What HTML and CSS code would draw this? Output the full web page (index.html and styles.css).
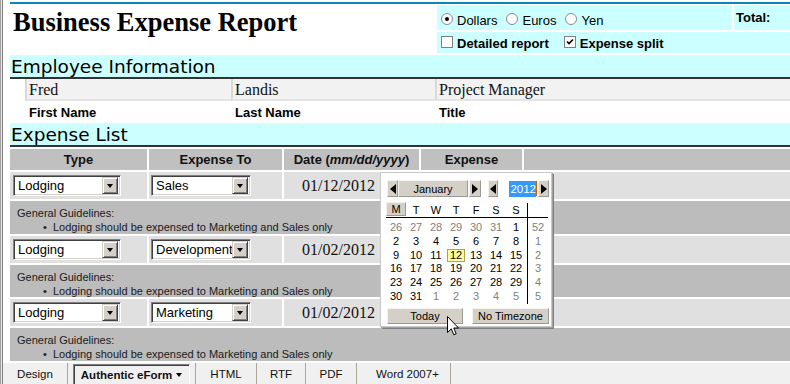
FILE: index.html
```html
<!DOCTYPE html>
<html>
<head>
<meta charset="utf-8">
<title>Business Expense Report</title>
<link rel="stylesheet" href="styles.css">
</head>
<body>
<div class="window">
  <div class="frame-edge"></div>
  <div class="main">
    <div class="doc">
      <div class="topline"></div>
      <div class="head">
        <div class="title-cell"><h1 class="title">Business Expense Report</h1></div>
        <div class="opts">
          <div class="opt-row1">
            <div class="currency">
              <svg class="radio" viewBox="0 0 12 12"><circle cx="6" cy="6" r="5.5" fill="#fff" stroke="#8a8a8a"/><circle cx="6" cy="6" r="2" fill="#000"/></svg><span class="lbl">Dollars</span>
              <svg class="radio" viewBox="0 0 12 12"><circle cx="6" cy="6" r="5.5" fill="#fff" stroke="#8a8a8a"/></svg><span class="lbl">Euros</span>
              <svg class="radio" viewBox="0 0 12 12"><circle cx="6" cy="6" r="5.5" fill="#fff" stroke="#8a8a8a"/></svg><span class="lbl">Yen</span>
            </div>
            <div class="total">Total:</div>
          </div>
          <div class="opt-row2">
            <svg class="check" viewBox="0 0 12 12"><rect x="0.5" y="0.5" width="11" height="11" fill="#fff" stroke="#808080"/></svg><span class="lbl">Detailed report</span>
            <svg class="check second" viewBox="0 0 12 12"><rect x="0.5" y="0.5" width="11" height="11" fill="#fff" stroke="#808080"/><path d="M3 5.5 L5 7.5 L9 3.5" fill="none" stroke="#000" stroke-width="1.6"/></svg><span class="lbl">Expense split</span>
          </div>
        </div>
      </div>

      <div class="band band-first">Employee Information</div>
      <div class="emp emp-values">
        <div class="ecell">Fred</div>
        <div class="ecell">Landis</div>
        <div class="ecell">Project Manager</div>
      </div>
      <div class="emp emp-labels">
        <div class="lcell">First Name</div>
        <div class="lcell">Last Name</div>
        <div class="lcell">Title</div>
      </div>

      <div class="band">Expense List</div>
      <div class="expenses">
        <div class="th">Type</div>
        <div class="th">Expense To</div>
        <div class="th">Date (<i>mm/dd/yyyy</i>)</div>
        <div class="th">Expense</div>
        <div class="th"></div>

        <div class="td"><div class="select s-type"><span class="val">Lodging</span><span class="drop"></span></div></div>
        <div class="td"><div class="select s-to"><span class="val">Sales</span><span class="drop"></span></div></div>
        <div class="td date">01/12/2012</div>
        <div class="td"></div>
        <div class="td"></div>
        <div class="guide">
          <div>General Guidelines:</div>
          <div class="bullet"><span class="dot">•</span>Lodging should be expensed to Marketing and Sales only</div>
        </div>

        <div class="td"><div class="select s-type"><span class="val">Lodging</span><span class="drop"></span></div></div>
        <div class="td"><div class="select s-to"><span class="val">Development</span><span class="drop"></span></div></div>
        <div class="td date">01/02/2012</div>
        <div class="td"></div>
        <div class="td"></div>
        <div class="guide">
          <div>General Guidelines:</div>
          <div class="bullet"><span class="dot">•</span>Lodging should be expensed to Marketing and Sales only</div>
        </div>

        <div class="td"><div class="select s-type"><span class="val">Lodging</span><span class="drop"></span></div></div>
        <div class="td"><div class="select s-to"><span class="val">Marketing</span><span class="drop"></span></div></div>
        <div class="td date">01/02/2012</div>
        <div class="td"></div>
        <div class="td"></div>
        <div class="guide">
          <div>General Guidelines:</div>
          <div class="bullet"><span class="dot">•</span>Lodging should be expensed to Marketing and Sales only</div>
        </div>
      </div>

      <div class="cal">
        <div class="cal-head">
          <span class="cbtn arrow a1"><span class="tri-l"></span></span>
          <span class="cbtn month">January</span>
          <span class="cbtn arrow a2"><span class="tri-r"></span></span>
          <span class="cbtn arrow a3"><span class="tri-l"></span></span>
          <span class="year"><span class="ysel">2012</span><span class="caret"></span></span>
          <span class="cbtn arrow a4"><span class="tri-r"></span></span>
        </div>
        <div class="cal-body">
          <div class="days">
            <div class="dow-row">
              <span class="cur">M</span><span>T</span><span>W</span><span>T</span><span>F</span><span>S</span><span>S</span>
            </div>
            <div class="date-grid">
              <span class="o">26</span><span class="o">27</span><span class="o">28</span><span class="o">29</span><span class="o">30</span><span class="o">31</span><span>1</span>
              <span>2</span><span>3</span><span>4</span><span>5</span><span>6</span><span>7</span><span>8</span>
              <span>9</span><span>10</span><span>11</span><span class="today"><b>12</b></span><span>13</span><span>14</span><span>15</span>
              <span>16</span><span>17</span><span>18</span><span>19</span><span>20</span><span>21</span><span>22</span>
              <span>23</span><span>24</span><span>25</span><span>26</span><span>27</span><span>28</span><span>29</span>
              <span>30</span><span>31</span><span class="o">1</span><span class="o">2</span><span class="o">3</span><span class="o">4</span><span class="o">5</span>
            </div>
          </div>
          <div class="weeks">
            <div class="dow-row"></div>
            <div class="wk-list"><span>52</span><span>1</span><span>2</span><span>3</span><span>4</span><span>5</span></div>
          </div>
        </div>
        <div class="cal-foot">
          <span class="cbtn fbtn today-btn">Today</span>
          <span class="cbtn fbtn tz-btn">No Timezone</span>
        </div>
      </div>

      <svg class="cursor" viewBox="0 0 12 20" width="12" height="20"><path d="M0.5 0.5 L0.5 16.5 L4.3 12.8 L6.8 18.8 L9.2 17.8 L6.8 12 L11.5 12 Z" fill="#fff" stroke="#000" stroke-width="1" stroke-linejoin="miter"/></svg>
    </div>

    <div class="tabbar">
      <div class="tab t1">Design</div>
      <div class="tab t2"><div class="active-tab"><b>Authentic eForm</b><span class="tab-tri"></span></div></div>
      <div class="tab t3">HTML</div>
      <div class="tab t4">RTF</div>
      <div class="tab t5">PDF</div>
      <div class="tab t6">Word 2007+</div>
    </div>
  </div>
</div>
</body>
</html>
```

FILE: styles.css
```css
* { box-sizing: border-box; }
html, body { margin: 0; padding: 0; }
body {
  width: 790px;
  height: 384px;
  overflow: hidden;
  background: #fff;
  font-family: "Liberation Sans", Arial, sans-serif;
  color: #000;
}
.window { display: flex; height: 384px; }
.frame-edge {
  width: 3px;
  flex: none;
  background: linear-gradient(to right, #a0a0a0 0 1px, #e8e8e8 1px 2px, #808080 2px 3px);
}
.main { flex: 1; display: flex; flex-direction: column; min-width: 0; }
.doc { flex: 1; position: relative; padding: 2px 0 0 7px; overflow: hidden; }
.topline { height: 2px; background: #0a87b8; margin-bottom: 1px; }

/* header */
.head { display: grid; grid-template-columns: 425px 1fr; column-gap: 2px; height: 48px; }
.title-cell { padding: 2px 0 0 3px; }
.title { margin: 0; font: bold 26.5px/30px "Liberation Serif", "Times New Roman", serif; white-space: nowrap; }
.opts { display: grid; grid-template-rows: 25px 21px; row-gap: 2px; }
.opt-row1 { display: grid; grid-template-columns: 1fr 56px; column-gap: 2px; }
.currency, .total, .opt-row2 { background: #ccffff; }
.currency { display: flex; align-items: flex-start; padding: 8px 0 0 4px; font-size: 13px; line-height: 15px; }
.total { padding: 5px 0 0 2px; font-weight: bold; font-size: 13px; line-height: 15px; }
.opt-row2 { display: flex; align-items: flex-start; padding: 3.5px 0 0 4px; font-size: 13px; line-height: 15px; font-weight: bold; }
.radio { width: 12px; height: 12px; flex: none; }
.radio + .lbl { margin-left: 4px; }
.lbl + .radio { margin-left: 9px; }
.check { width: 12px; height: 12px; flex: none; }
.check + .lbl { margin-left: 4px; }
.check.second { margin-left: 15px; }

/* section bands */
.band {
  height: 24px;
  background: #ccffff;
  border-bottom: 2px solid #333;
  font-family: "DejaVu Sans", Verdana, sans-serif;
  font-size: 18.5px;
  line-height: 21px;
  padding: 1px 0 0 1px;
  white-space: nowrap;
}
.band-first { margin-top: 2px; }

/* employee */
.emp { display: grid; grid-template-columns: 206px 204px 1fr; margin-left: 15px; }
.ecell {
  height: 22px;
  background: #f2f2f2;
  border-left: 2px solid #d9d9d9;
  border-bottom: 2px solid #e4e4e4;
  padding: 2px 0 0 2px;
  font: 16px/18px "Liberation Serif", "Times New Roman", serif;
  color: #111;
}
.lcell {
  height: 22px;
  padding: 4px 0 0 4px;
  font-weight: bold;
  font-size: 13px;
  line-height: 15px;
}

/* expense table */
.expenses {
  margin-top: 2px;
  display: grid;
  grid-template-columns: 137px 133px 135px 101px 1fr;
  grid-template-rows: 21px 27px 33px 27px 32px 27px 33px;
  gap: 2px;
}
.th {
  background: #c0c0c0;
  font-weight: bold;
  font-size: 13px;
  display: flex;
  align-items: center;
  justify-content: center;
  color: #111;
}
.td { background: #e0e0e0; display: flex; align-items: center; }
.date { font: 16px "Liberation Serif", "Times New Roman", serif; padding-left: 18px; padding-top: 1px; color: #111; }
.guide {
  grid-column: 1 / -1;
  background: #bcbcbc;
  padding: 5px 0 0 7px;
  font-size: 11px;
  line-height: 14px;
  color: #1a1a1a;
}
.bullet { padding-left: 26px; }
.dot { display: inline-block; width: 10px; }

.select {
  height: 21px;
  background: #fff;
  display: flex;
  align-items: center;
  border: 1px solid;
  border-color: #808080 #fff #fff #808080;
  box-shadow: inset 1px 1px 0 #404040, inset -1px -1px 0 #d4d0c8;
  padding: 0 2px 0 4px;
  font-size: 13px;
}
.s-type { width: 108px; margin-left: 3px; }
.s-to { width: 100px; margin-left: 2px; }
.val { flex: 1; white-space: nowrap; overflow: hidden; }
.drop {
  width: 16px;
  height: 17px;
  flex: none;
  background: #d4d0c8;
  border: 1px solid;
  border-color: #d4d0c8 #404040 #404040 #d4d0c8;
  box-shadow: inset 1px 1px 0 #fff, inset -1px -1px 0 #808080;
  display: flex;
  align-items: center;
  justify-content: center;
}
.drop::after {
  content: "";
  border-left: 3.5px solid transparent;
  border-right: 3.5px solid transparent;
  border-top: 4px solid #000;
}

/* calendar popup */
.cal {
  position: absolute;
  left: 377px;
  top: 172px;
  width: 172px;
  height: 155px;
  background: #fff;
  border: 1px solid #c8c8c8;
  box-shadow: 1px 1px 0 #a0a0a0, 2px 2px 0 #808080;
  padding: 7px 0 0 5px;
  font-size: 10.5px;
}
.cal-head { display: flex; height: 17px; align-items: stretch; }
.cbtn {
  background: #d4d0c8;
  border: 1px solid;
  border-color: #f4f3ee #9a9890 #9a9890 #f4f3ee;
  display: flex;
  align-items: center;
  justify-content: center;
}
.arrow { width: 11px; }
.a1 { margin-left: 1px; }
.month { width: 70px; font-size: 11px; }
.a2 { margin-left: 1px; width: 12px; }
.a3 { margin-left: 7px; width: 10px; }
.a4 { width: 11px; }
.tri-l { border-top: 5px solid transparent; border-bottom: 5px solid transparent; border-right: 6px solid #000; }
.tri-r { border-top: 5px solid transparent; border-bottom: 5px solid transparent; border-left: 6px solid #000; }
.year { width: 40px; display: flex; justify-content: flex-end; align-items: center; font-size: 11.5px; }
.ysel { background: #3399ff; color: #fff; padding: 1px 0 1px 1px; line-height: 14px; }
.caret { width: 1px; height: 15px; background: #d06000; margin-right: 1px; }

.cal-body { display: flex; margin-top: 6px; }
.days { width: 141px; }
.dow-row { height: 15px; border-bottom: 1px solid #000; display: flex; font-size: 11px; }
.days .dow-row span { width: 20px; text-align: center; line-height: 14px; }
.days .dow-row .cur {
  background: #d4d0c8;
  border: 1px solid;
  border-color: #f4f3ee #9a9890 #9a9890 #f4f3ee;
  line-height: 12px;
  height: 14px;
  margin-top: -1px;
}
.date-grid {
  padding-top: 3px;
  display: grid;
  grid-template-columns: repeat(7, 20px);
  grid-auto-rows: 13.8px;
  font-size: 11px;
  line-height: 13.8px;
  text-align: center;
}
.date-grid .o { color: #808080; }
.date-grid .today b {
  display: inline-block;
  font-weight: normal;
  width: 18px;
  height: 13px;
  margin-top: 0.5px;
  background: #ffffa0;
  border: 1px solid #b4a050;
  line-height: 11px;
}
.weeks { width: 21px; border-left: 1px solid #000; }
.wk-list {
  padding-top: 3px;
  display: grid;
  grid-auto-rows: 13.8px;
  font-size: 11px;
  line-height: 13.8px;
  text-align: center;
  color: #808080;
}
.cal-foot { display: flex; margin-top: 4px; height: 16px; }
.fbtn { font-size: 11px; }
.today-btn { width: 76px; margin-left: 1px; }
.tz-btn { width: 77px; margin-left: 9px; }

.cursor { position: absolute; left: 444px; top: 316px; }

/* tab bar */
.tabbar {
  height: 21px;
  flex: none;
  background: #f0f0f0;
  display: flex;
  font-size: 11.5px;
}
.tab {
  border-right: 1px solid #aca899;
  display: flex;
  align-items: center;
  justify-content: center;
  color: #111;
  white-space: nowrap;
}
.t1 { width: 65px; }
.t2 { width: 128px; padding: 1px 5px 0 5px; align-items: stretch; }
.t3 { width: 61px; }
.t4 { width: 49px; }
.t5 { width: 51px; }
.t6 { width: 94px; padding-left: 8px; }
.active-tab {
  flex: 1;
  display: flex;
  align-items: center;
  justify-content: center;
  border-top: 1px solid #808080;
  border-left: 1px solid #808080;
  border-right: 1px solid #fff;
  box-shadow: inset 1px 1px 0 #404040;
  padding-top: 1px;
  font-size: 11.5px;
}
.tab-tri {
  margin-left: 4px;
  border-left: 3.5px solid transparent;
  border-right: 3.5px solid transparent;
  border-top: 4px solid #000;
}
```
